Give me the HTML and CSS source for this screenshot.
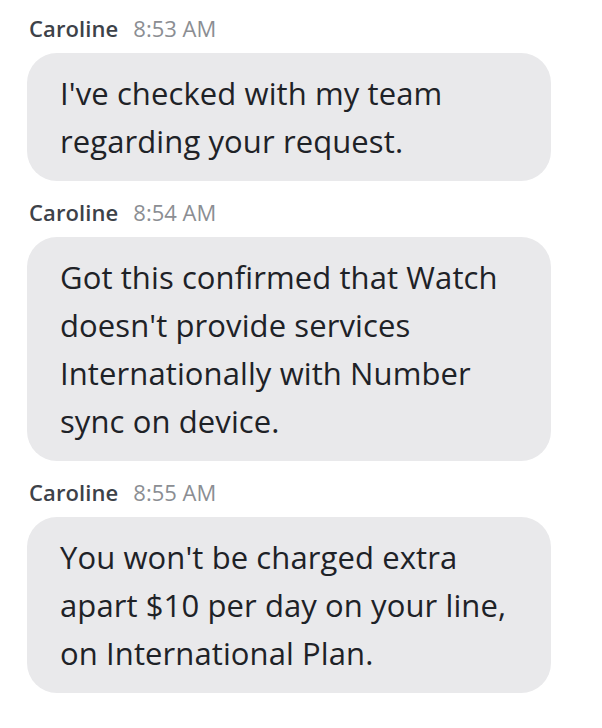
FILE: index.html
```html
<!DOCTYPE html>
<html lang="en">

<head>
    <meta charset="UTF-8">
    <meta name="viewport" content="width=device-width, initial-scale=1.0">
    <title>Chat</title>
    <link rel="stylesheet" href="styles.css">
</head>

<body>
    <div class="chat">
        <div class="message">
            <div class="meta">
                <span class="name">Caroline</span>
                <span class="time">8:53 AM</span>
            </div>
            <div class="bubble">I've checked with my team<br>regarding your request.</div>
        </div>
        <div class="message">
            <div class="meta">
                <span class="name">Caroline</span>
                <span class="time">8:54 AM</span>
            </div>
            <div class="bubble">Got this confirmed that Watch<br>doesn't provide services<br>Internationally with Number<br>sync on device.</div>
        </div>
        <div class="message">
            <div class="meta">
                <span class="name">Caroline</span>
                <span class="time">8:55 AM</span>
            </div>
            <div class="bubble">You won't be charged extra<br>apart $10 per day on your line,<br>on International Plan.</div>
        </div>
    </div>
</body>

</html>
```
FILE: styles.css
```css
* {
    margin: 0;
    padding: 0;
    box-sizing: border-box;
}

body {
    background-color: #fff;
    font-family: "Open Sans", "Noto Sans", sans-serif;
}

.chat {
    width: 524px;
    margin-left: 27px;
    padding-top: 16px;
    display: flex;
    flex-direction: column;
    gap: 19px;
}

.message .meta {
    display: flex;
    align-items: baseline;
    gap: 15px;
    height: 24px;
    line-height: 24px;
    margin-bottom: 13px;
    padding-left: 2px;
}

.message .name {
    font-size: 22px;
    font-weight: 600;
    color: #3d4249;
    letter-spacing: 0.1px;
}

.message .time {
    font-size: 22px;
    color: #8b8e93;
}

.message .bubble {
    background-color: #e9e9eb;
    border-radius: 30px;
    padding: 16px 20px 16px 33px;
    font-size: 31px;
    line-height: 48px;
    color: #1e2227;
    letter-spacing: 0.1px;
}
```
